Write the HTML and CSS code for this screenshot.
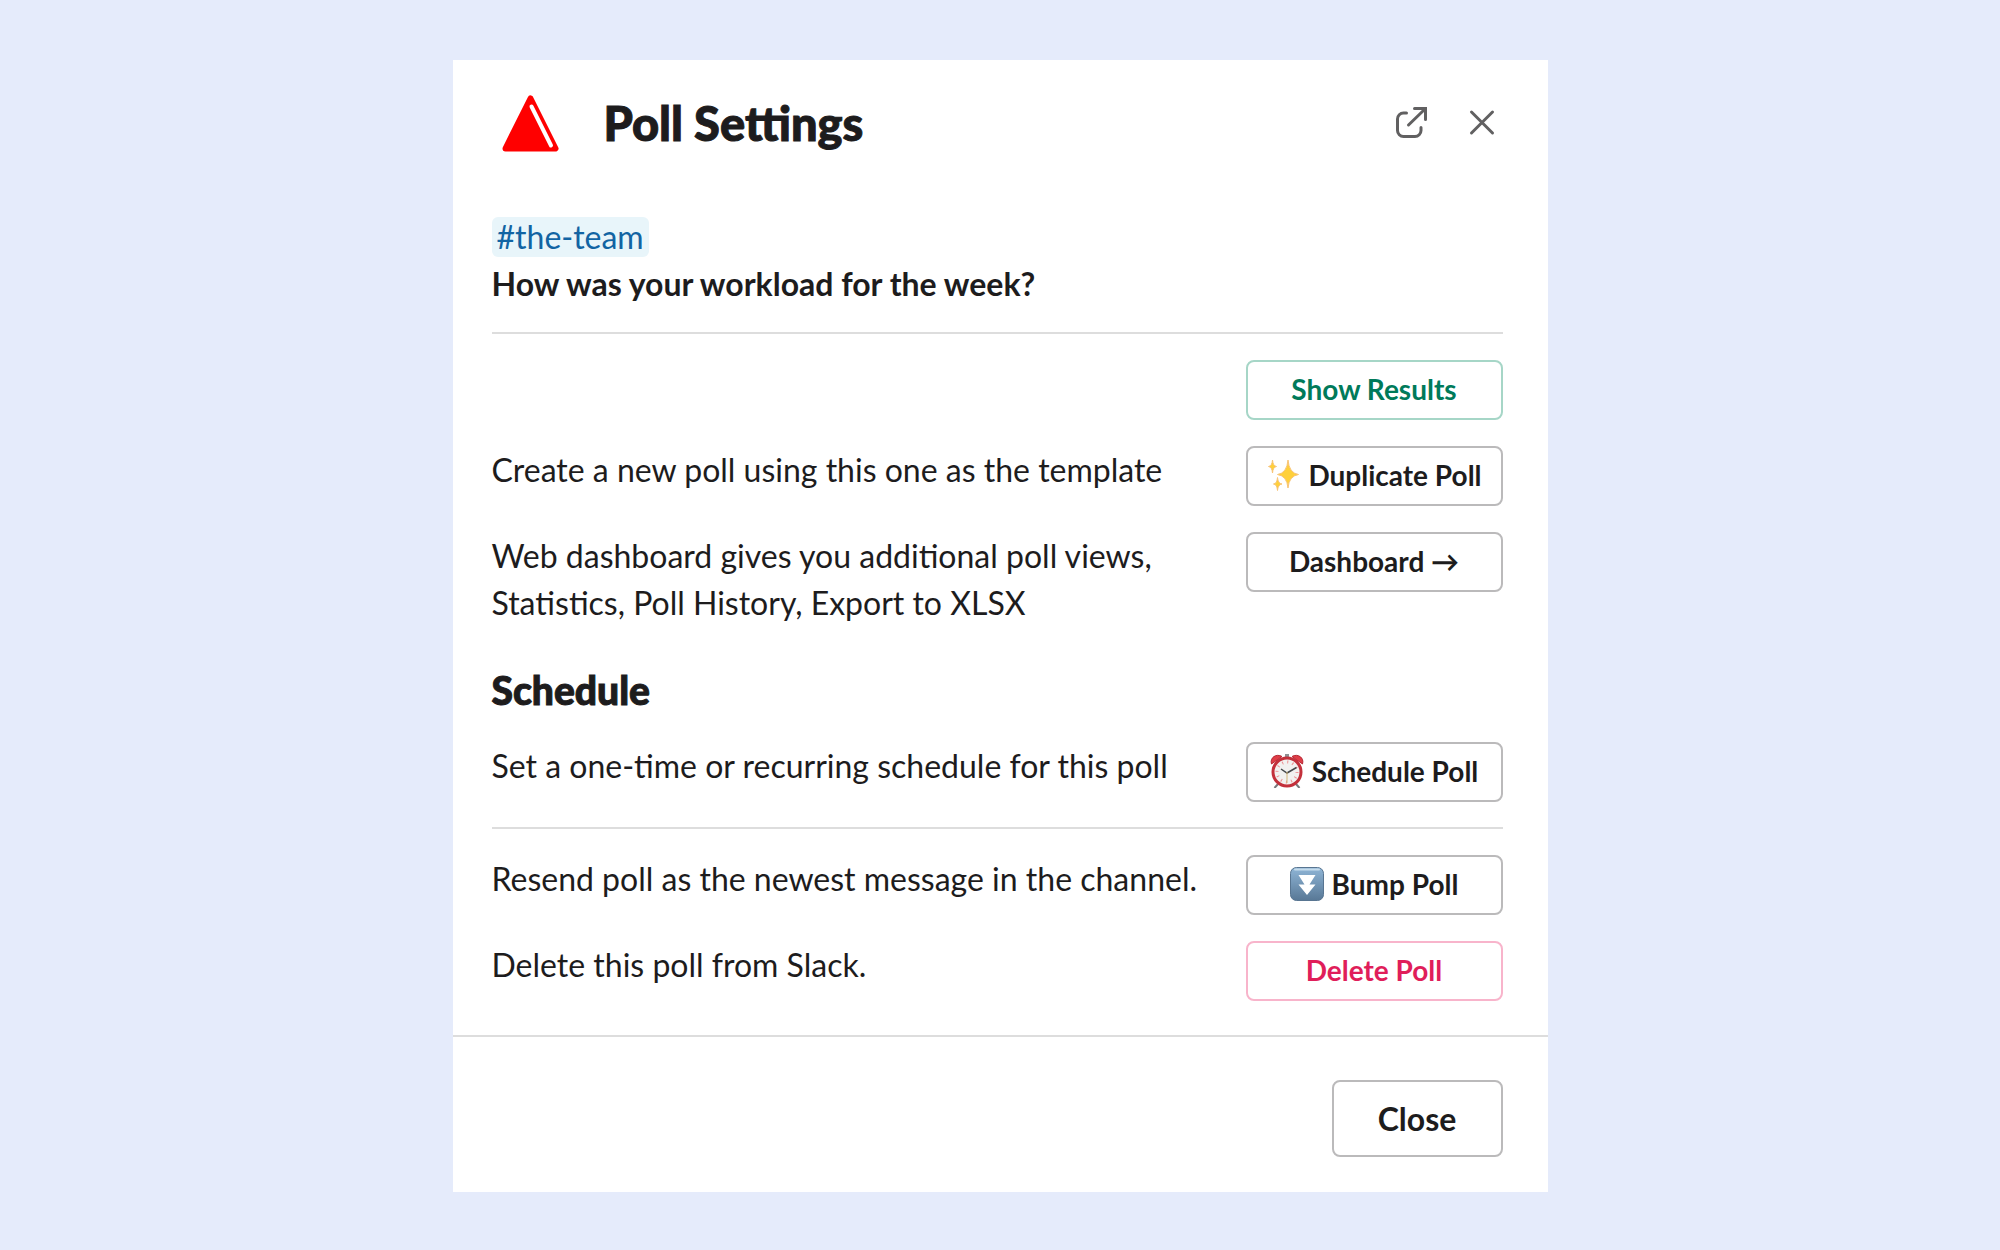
FILE: index.html
```html
<!DOCTYPE html>
<html lang="en">
<head>
<meta charset="utf-8">
<meta name="viewport" content="width=device-width, initial-scale=1">
<title>Poll Settings</title>
<link rel="stylesheet" href="styles.css">
</head>
<body>
<main class="modal" role="dialog" aria-labelledby="modal-title">
  <header class="modal-header">
    <svg class="logo" viewBox="0 0 57 57" aria-hidden="true">
      <path d="M28.500 3.500 53.500 53.500H3.500Z" fill="#f00" stroke="#f00" stroke-width="6" stroke-linejoin="round"/>
      <path d="M29.500 11.500 49 50.500" stroke="#fff" stroke-width="4" stroke-linecap="round"/>
    </svg>
    <h1 class="modal-title" id="modal-title">Poll Settings</h1>
    <div class="header-actions">
      <button class="icon-button" type="button" aria-label="Open in new window">
        <svg class="icon" viewBox="0 0 40 40" aria-hidden="true">
          <path d="M15.500 11H12.500a6 6 0 0 0-6 6v11.500a6 6 0 0 0 6 6H24a6 6 0 0 0 6-6V25.500M17.500 23 34 7"/>
          <path d="M23.500 6.500H34.500V17.500" stroke-linejoin="miter"/>
        </svg>
      </button>
      <button class="icon-button" type="button" aria-label="Close dialog">
        <svg class="icon" viewBox="0 0 40 40" aria-hidden="true"><path d="M9.500 10 30.500 31M30.500 10 9.500 31"/></svg>
      </button>
    </div>
  </header>

  <div class="modal-body">
    <div class="poll">
      <a class="channel" href="#the-team">#the-team</a>
      <p class="question">How was your workload for the week?</p>
    </div>
    <hr class="divider">
    <section class="rows">
      <div class="row">
        <button class="button button-primary" type="button">Show Results</button>
      </div>
      <div class="row">
        <p class="row-text">Create a new poll using this one as the template</p>
        <button class="button" type="button">
          <svg class="emoji" viewBox="0 0 34 34" aria-hidden="true">
            <g fill="#ffd03b" stroke="#f8c478" stroke-width="1" stroke-linejoin="round">
              <path d="M22 2Q23 15 32.500 16.500 23 18 22 30 21 18 11.500 16.500 21 15 22 2Z"/>
              <path d="M6.500 2Q7 8 10.500 8.500 7 9 6.500 15 6 9 2.500 8.500 6 8 6.500 2Z"/>
              <path d="M11.500 19.500Q12 25.500 16 26 12 26.500 11.500 32.500 11 26.500 7.500 26 11 25.500 11.500 19.500Z"/>
            </g>
          </svg>
          Duplicate Poll
        </button>
      </div>
      <div class="row">
        <p class="row-text">Web dashboard gives you additional poll views, Statistics, Poll History, Export to XLSX</p>
        <button class="button" type="button">Dashboard →</button>
      </div>
    </section>
    <h2 class="section-title">Schedule</h2>
    <section class="rows">
      <div class="row">
        <p class="row-text">Set a one-time or recurring schedule for this poll</p>
        <button class="button" type="button">
          <svg class="emoji" viewBox="0 0 34 34" aria-hidden="true">
            <path d="M8 30 4.500 34M26 30 29.500 34" stroke="#77797c" stroke-width="2"/>
            <rect x="15" y="0" width="4" height="4" fill="#8d9094"/>
            <path d="M1.500 10C-.5 4 6 -1 12 2.500Z" fill="#df3d47" stroke="#b52834" stroke-width="1"/>
            <path d="M32.500 10C34.500 4 28 -1 22 2.500Z" fill="#df3d47" stroke="#b52834" stroke-width="1"/>
            <circle cx="17" cy="18" r="14" fill="#f2f1f0" stroke="#c3303b" stroke-width="3"/>
            <circle cx="17" cy="18" r="10" fill="none" stroke="#ed8f91" stroke-width="3" stroke-dasharray="1 4.236"/>
            <path d="M11 15 17 19 26.500 13.500" fill="none" stroke="#45484b" stroke-width="1.500"/>
            <path d="M17 18V29" stroke="#d2b578" stroke-width="1"/>
          </svg>
          Schedule Poll
        </button>
      </div>
    </section>
    <hr class="divider">
    <section class="rows">
      <div class="row">
        <p class="row-text">Resend poll as the newest message in the channel.</p>
        <button class="button" type="button">
          <svg class="emoji" viewBox="0 0 34 34" aria-hidden="true">
            <defs>
              <linearGradient id="tile" x1="0" y1="0" x2="0" y2="1">
                <stop offset="0" stop-color="#8fb5d6"/>
                <stop offset="1" stop-color="#587896"/>
              </linearGradient>
            </defs>
            <rect x=".5" y=".5" width="33" height="33" rx="6" fill="url(#tile)" stroke="#587591"/>
            <path d="M5 2.500H29" stroke="#c5dcec" stroke-width="2" stroke-linecap="round"/>
            <path d="M8.500 8H25.500L19.500 17.500H25.500L17 28 8.500 17.500H14.500Z" fill="#fff"/>
          </svg>
          Bump Poll
        </button>
      </div>
      <div class="row">
        <p class="row-text">Delete this poll from Slack.</p>
        <button class="button button-danger" type="button">Delete Poll</button>
      </div>
    </section>
  </div>

  <footer class="modal-footer">
    <button class="button button-large" type="button">Close</button>
  </footer>
</main>
</body>
</html>
```

FILE: styles.css
```css
* {
  box-sizing: border-box;
}

body {
  margin: 0;
  min-height: 100vh;
  padding: 60px 20px 58px;
  background: #e5ebfb;
  color: #1d1c1d;
  font: 32px/47px Lato, "Liberation Sans", sans-serif;
}

h1, h2, p {
  margin: 0;
}

.modal {
  max-width: 1095px;
  margin: 0 auto;
  background: #fff;
}

.modal-header {
  display: flex;
  align-items: center;
  padding: 28px 45px 0 49px;
}

.logo {
  width: 57px;
  height: 57px;
}

.modal-title {
  flex: 1;
  margin-left: 45px;
  font-size: 47px;
  font-weight: 900;
  line-height: 70px;
  -webkit-text-stroke: 1px currentColor;
}

.header-actions {
  display: flex;
  gap: 31px;
  padding: 0 1px 2px 0;
}

.icon-button {
  display: flex;
  padding: 0;
  border: 0;
  background: none;
}

.icon {
  width: 40px;
  height: 40px;
  fill: none;
  stroke: #616061;
  stroke-width: 3;
  stroke-linecap: round;
}

.modal-body {
  padding: 55px 45px 34px 39px;
}

.channel {
  display: inline-block;
  margin: 4px 0 3px;
  padding: 0 5px;
  border-radius: 6px;
  background: #e8f5fa;
  color: #1264a3;
  line-height: 40px;
  text-decoration: none;
  vertical-align: top;
}

.question {
  font-weight: 700;
}

.divider {
  height: 2px;
  margin: 25px 0 26px;
  border: 0;
  background: #dddddd;
}

.rows {
  display: flex;
  flex-direction: column;
  gap: 26px;
}

.row {
  display: flex;
  align-items: flex-start;
  justify-content: flex-end;
  gap: 40px;
}

.row-text {
  flex: 1;
}

.button {
  display: flex;
  align-items: center;
  justify-content: center;
  gap: 8px;
  width: 257px;
  height: 60px;
  padding: 0 0 2px;
  border: 2px solid #bbbabb;
  border-radius: 8px;
  background: #fff;
  color: #1d1c1d;
  font: inherit;
  font-size: 28px;
  font-weight: 700;
  white-space: nowrap;
}

.button-primary {
  border-color: #a6d6c7;
  color: #007a5a;
}

.button-danger {
  border-color: #f8b4cb;
  color: #e01e5a;
}

.button-large {
  width: 171px;
  height: 77px;
  padding: 0;
  font-size: 32px;
}

.emoji {
  width: 34px;
  height: 34px;
}

.section-title {
  margin: 37px 0 24px;
  font-size: 39px;
  font-weight: 900;
  line-height: 55px;
  -webkit-text-stroke: 1px currentColor;
}

.modal-footer {
  display: flex;
  justify-content: flex-end;
  padding: 43px 45px 35px;
  border-top: 2px solid #dddddd;
}
```
